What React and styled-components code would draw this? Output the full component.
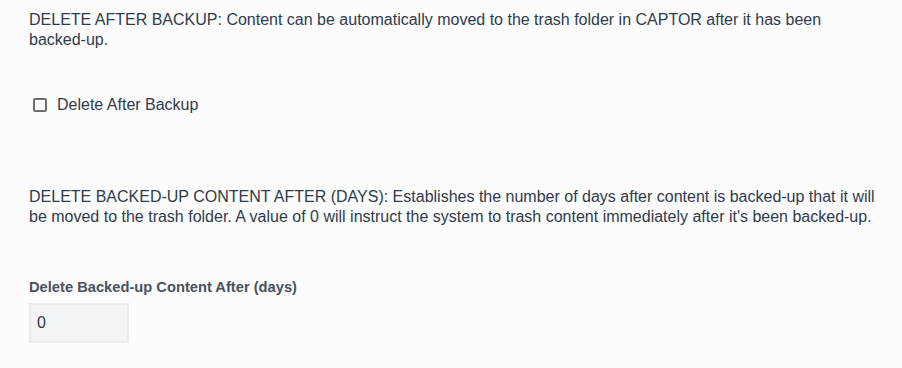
import React from "react";
import styled, { createGlobalStyle } from "styled-components";

const Global = createGlobalStyle`
  html, body { margin: 0; padding: 0; background: #fcfcfc; }
  body { font-family: "Liberation Sans", Arial, sans-serif; color: #2f3b4a; }
`;

const Page = styled.div`
  padding: 10px 20px 0 29px;
  display: flex;
  flex-direction: column;
`;

const Description = styled.p`
  margin: 0;
  font-size: 16px;
  line-height: 20px;
  color: #2f3b4a;
`;

const CheckRow = styled.label`
  display: flex;
  align-items: center;
  gap: 10px;
  height: 19px;
  margin: 45px 0 0 4px;
  font-size: 16px;
  color: #2f3b4a;
`;

const Box = styled.span`
  width: 10px;
  height: 10px;
  border: 2px solid #6e6e6e;
  border-radius: 2px;
  background: #fff;
  flex: none;
`;

const Section = styled.div`
  margin-top: ${(p) => p.$top}px;
`;

const FieldLabel = styled.div`
  font-size: 14.7px;
  line-height: 17px;
  font-weight: bold;
  color: #47525e;
  margin-bottom: 7px;
`;

const Input = styled.div`
  width: 90px;
  height: 36px;
  box-sizing: content-box;
  border: 2px solid #e9ebed;
  background: #f2f4f6;
  display: flex;
  align-items: center;
  padding-left: 6px;
  font-size: 16px;
  color: #2f3b4a;
`;

export default function App() {
  return (
    <>
      <Global />
      <Page>
        <Description>
          DELETE AFTER BACKUP: Content can be automatically moved to the trash folder in CAPTOR after it has been backed-up.
        </Description>
        <CheckRow>
          <Box />
          Delete After Backup
        </CheckRow>
        <Section $top={73}>
          <Description>
            DELETE BACKED-UP CONTENT AFTER (DAYS): Establishes the number of days after content is backed-up that it will be moved to the trash folder. A value of 0 will instruct the system to trash content immediately after it's been backed-up.
          </Description>
        </Section>
        <Section $top={52}>
          <FieldLabel>Delete Backed-up Content After (days)</FieldLabel>
          <Input>0</Input>
        </Section>
      </Page>
    </>
  );
}
